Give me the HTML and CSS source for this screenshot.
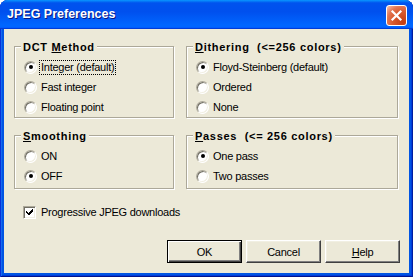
FILE: index.html
```html
<!DOCTYPE html>
<html>
<head>
<meta charset="utf-8">
<title>JPEG Preferences</title>
<link rel="stylesheet" href="styles.css">
</head>
<body>
<div class="window">
  <div class="titlebar">
    <span class="title">JPEG Preferences</span>
    <span class="close">
      <svg width="21" height="21" viewBox="0 0 21 21"><path d="M6.5 6.5 L14.5 14.5 M14.5 6.5 L6.5 14.5" stroke="#fff" stroke-width="2.2" stroke-linecap="square" fill="none"/></svg>
    </span>
  </div>
  <div class="client">
    <div class="groups">
      <div class="group tall">
        <div class="legend">DCT <u>M</u>ethod</div>
        <div class="opt"><span class="radio on"></span><span class="lbl focus">Integer (default)</span></div>
        <div class="opt"><span class="radio"></span><span class="lbl">Fast integer</span></div>
        <div class="opt"><span class="radio"></span><span class="lbl">Floating point</span></div>
      </div>
      <div class="group tall">
        <div class="legend"><u>D</u>ithering&nbsp; (&lt;=256 colors)</div>
        <div class="opt"><span class="radio on"></span><span class="lbl">Floyd-Steinberg (default)</span></div>
        <div class="opt"><span class="radio"></span><span class="lbl">Ordered</span></div>
        <div class="opt"><span class="radio"></span><span class="lbl">None</span></div>
      </div>
      <div class="group short">
        <div class="legend"><u>S</u>moothing</div>
        <div class="opt"><span class="radio"></span><span class="lbl">ON</span></div>
        <div class="opt"><span class="radio on"></span><span class="lbl">OFF</span></div>
      </div>
      <div class="group short">
        <div class="legend"><u>P</u>asses&nbsp; (&lt;= 256 colors)</div>
        <div class="opt"><span class="radio on"></span><span class="lbl">One pass</span></div>
        <div class="opt"><span class="radio"></span><span class="lbl">Two passes</span></div>
      </div>
    </div>
    <div class="check-row">
      <span class="checkbox"><svg width="7" height="7" viewBox="0 0 7 7"><path d="M0 2h1v1h1v1h1V3h1V2h1V1h1V0h1v3h-1v1h-1v1h-1v1h-1v1H3V6H2V5H1V4H0z" fill="#000"/></svg></span>
      <span class="lbl">Progressive JPEG downloads</span>
    </div>
    <div class="buttons">
      <span class="btn default">OK</span>
      <span class="btn">Cancel</span>
      <span class="btn"><u>H</u>elp</span>
    </div>
  </div>
</div>
</body>
</html>
```
FILE: styles.css
```css
html, body {
  margin: 0;
  padding: 0;
  background: #ffffff;
}

.window {
  width: 413px;
  height: 277px;
  box-sizing: border-box;
  display: flex;
  flex-direction: column;
  background: #0054e3;
  border-radius: 8px 8px 0 0;
  padding: 0 4px 4px 4px;
  box-shadow: inset 1px 0 #0831d9, inset -1px 0 #001ea0, inset 0 -1px #00138c, inset 2px 0 #166aee, inset -2px -2px #003bda;
  font-family: "Liberation Sans", Arial, sans-serif;
  font-size: 11px;
  color: #000;
}

.titlebar {
  height: 29px;
  margin: 0 -4px;
  padding: 0 6px 0 7px;
  display: flex;
  align-items: center;
  justify-content: space-between;
  border-radius: 8px 8px 0 0;
  background: linear-gradient(180deg, #0997ff 0%, #0053ee 10%, #0050ee 40%, #0066ff 86%, #0066ff 92%, #005bff 95%, #003dd7 97%, #003dd7 100%);
}

.title {
  color: #fff;
  font-weight: bold;
  font-size: 12.5px;
  line-height: 15px;
  margin-top: 0px;
  text-shadow: 1px 1px #0a1883;
}

.close {
  width: 21px;
  height: 21px;
  box-sizing: border-box;
  border: 1px solid #fff;
  border-radius: 3px;
  margin-top: 1px;
  display: flex;
  background: radial-gradient(circle at 85% 85%, #c43d13 0%, #d95a2e 45%, #e27552 70%, #f6b7a0 95%, #ffd9cc 100%);
}

.close svg {
  margin: -1px;
}

.client {
  flex: 1;
  background: #ece9d8;
  padding: 17px 9px 10px 10px;
  display: flex;
  flex-direction: column;
}

.groups {
  display: grid;
  grid-template-columns: 160px 212px;
  column-gap: 12px;
  row-gap: 17px;
}

.group {
  position: relative;
  border: 1px solid #aca899;
  box-shadow: inset 1px 1px #fff, 1px 1px #fff;
  padding-top: 10px;
}

.group.short {
  padding-bottom: 2px;
}

.legend {
  position: absolute;
  top: -6px;
  left: 6px;
  padding: 0 2px;
  background: #ece9d8;
  font-weight: bold;
  line-height: 13px;
  letter-spacing: 0.7px;
  white-space: nowrap;
}

.opt {
  height: 20px;
  display: flex;
  align-items: center;
  padding-left: 9px;
}

.radio {
  width: 13px;
  height: 13px;
  box-sizing: border-box;
  border-radius: 50%;
  border: 1px solid;
  border-color: #aca899 #fff #fff #aca899;
  box-shadow: inset 1px 1px #716f64, inset -1px -1px #f1efe2;
  background: #fff;
  display: flex;
  align-items: center;
  justify-content: center;
  flex: none;
}

.radio.on::after {
  content: "";
  width: 4px;
  height: 4px;
  border-radius: 50%;
  background: #000;
}

.lbl {
  margin-left: 4px;
  line-height: 13px;
  letter-spacing: -0.25px;
  white-space: nowrap;
}

.lbl.focus {
  margin-left: 2px;
  padding: 0 1px;
  border: 1px dotted #000;
}

.check-row {
  height: 20px;
  margin-top: 13px;
  display: flex;
  align-items: center;
  padding-left: 9px;
}

.checkbox {
  width: 13px;
  height: 13px;
  box-sizing: border-box;
  border: 1px solid;
  border-color: #aca899 #fff #fff #aca899;
  box-shadow: inset 1px 1px #716f64, inset -1px -1px #f1efe2;
  background: #fff;
  display: flex;
  align-items: center;
  justify-content: center;
  flex: none;
}

.check-row .lbl {
  margin-left: 5px;
}

.buttons {
  margin-top: auto;
  display: flex;
  justify-content: flex-end;
  gap: 4px;
}

.btn {
  width: 75px;
  height: 23px;
  box-sizing: border-box;
  display: flex;
  align-items: center;
  justify-content: center;
  border: 1px solid;
  border-color: #fff #404040 #404040 #fff;
  box-shadow: inset -1px -1px #808080, inset 1px 1px #f1efe2;
  background: #ece9d8;
  letter-spacing: -0.25px;
}

.btn.default {
  border: 1px solid #000;
  box-shadow: inset 1px 1px #fff, inset -1px -1px #404040, inset -2px -2px #808080;
}
```
